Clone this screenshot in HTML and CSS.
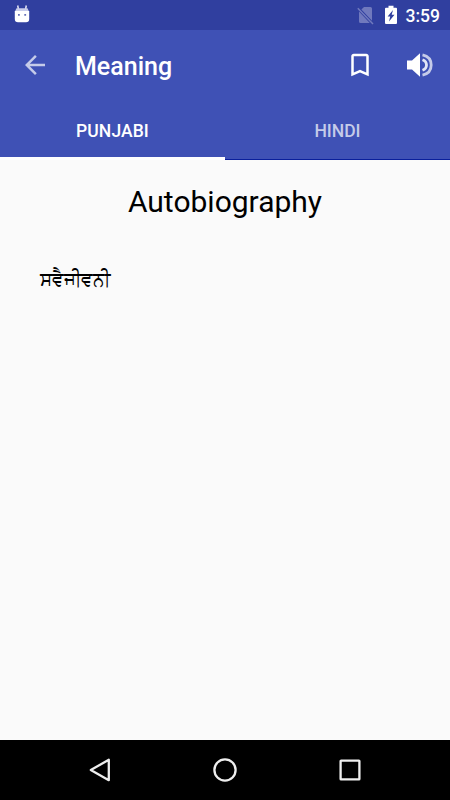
FILE: index.html
```
<!DOCTYPE html>
<html lang="en">
<head>
  <meta charset="utf-8">
  <meta name="viewport" content="width=device-width, initial-scale=1">
  <title>Meaning</title>
  <link rel="stylesheet" href="styles.css">
</head>

<body>
  <div class="statusbar">
    <svg class="notification" width="16" height="18" viewBox="0 0 16 18">
      <path d="M3.700 0.500L4.400 4M12.300 0.500L11.600 4" stroke="#e3e5f4" stroke-width="1.500"/>
      <path fill="#c9cdea" d="M2.500 3.300h11l1.700 3.500H0.800z"/>
      <path fill="#fff" d="M0.800 6h14.400v8q0 3.200-3.200 3.200H4Q0.800 17.200 0.800 14z"/>
      <path fill="#6670b8" d="M4 9h1.800v1.800H4zM10.300 9h1.800v1.800h-1.800z"/>
    </svg>
    <div class="system">
      <svg width="18" height="20" viewBox="0 0 18 20">
        <path fill="#7079bd" d="M7 2h6.500q1.500 0 1.500 1.500v12.300L4.400 4.600zM2 6.500L12.800 18H3.500Q2 18 2 16.500z"/>
        <path d="M0.800 3.200L16 19" stroke="#7079bd" stroke-width="1.500"/>
      </svg>
      <svg class="battery" width="12" height="20" viewBox="0 0 12 20">
        <path fill="#fff" d="M3.500 0.800h5v1.900H11q1 0 1 1V18q0 1-1 1H1q-1 0-1-1V3.700q0-1 1-1h2.500z"/>
        <path fill="#303f9f" d="M8 5L2.600 11.500h2.600L4 16.500l5.500-6.800H6.700z"/>
      </svg>
      <span class="clock">3:59</span>
    </div>
  </div>

  <div class="toolbar">
    <svg class="back" width="30" height="30" viewBox="0 0 24 24">
      <path d="M20 11H7.830l5.590-5.590L12 4l-8 8 8 8 1.410-1.410L7.830 13H20v-2z"/>
    </svg>
    <h1>Meaning</h1>
    <svg class="bookmark" width="30" height="30" viewBox="0 0 24 24">
      <path d="M17 3H7c-1.100 0-1.990.900-1.990 2L5 21l7-3 7 3V5c0-1.100-.900-2-2-2zm0 15l-5-2.180L7 18V5h10v13z"/>
    </svg>
    <svg class="speaker" width="30" height="30" viewBox="0 0 30 30">
      <path d="M2 10.500h5l8-7.200v23.400L7 19.500H2z"/>
      <path class="wave" d="M17.500 9.700q4 1.500 4 5.300t-4 5.300"/>
      <path class="wave outer" d="M17.500 4.800q8.700 2 8.700 10.200t-8.700 10.200"/>
    </svg>
  </div>

  <div class="tabs">
    <div class="tab active">PUNJABI</div>
    <div class="tab">HINDI</div>
  </div>

  <div class="content">
    <h2>Autobiography</h2>
    <p lang="pa">ਸਵੈਜੀਵਨੀ</p>
  </div>

  <div class="navbar">
    <svg width="30" height="30" viewBox="0 0 30 30">
      <path d="M23.800 4.800v20.400L5.800 15z"/>
    </svg>
    <svg width="30" height="30" viewBox="0 0 30 30">
      <circle cx="15" cy="15" r="10.600"/>
    </svg>
    <svg width="30" height="30" viewBox="0 0 30 30">
      <rect x="5.600" y="5.600" width="18.800" height="18.800" rx="0.500"/>
    </svg>
  </div>
</body>
</html>
```
FILE: styles.css
```
* {box-sizing:border-box;}
body {margin:0; height:800px; display:flex; flex-direction:column; background:#fafafa; color:#000; font-family:Roboto,"Noto Sans",sans-serif;}
h1, h2, p {margin:0;}
svg {display:block; flex:none;}

.statusbar {height:30px; padding:0 10px 0 14px; display:flex; align-items:center; justify-content:space-between; background:#303f9f; color:#fff;}
.notification {margin-bottom:3px;}
.system {display:flex; align-items:center;}
.battery {margin-left:10px;}
.clock {margin-left:9px; font-size:17.5px; font-weight:500; line-height:30px; padding-top:1px;}

.toolbar {height:70px; padding:0 15px 0 20px; display:flex; align-items:center; background:#3f51b5; color:#fff;}
.toolbar svg {fill:#fff;}
.toolbar .back {fill:#c5cbe9;}
.toolbar h1 {margin-left:25px; flex:1; font-size:25px; font-weight:500; line-height:30px; padding-top:4px;}
.speaker {margin-left:30px;}
.speaker .wave {fill:none; stroke:#e3e6f5; stroke-width:2.8;}
.speaker .outer {stroke:#c5cbe9;}

.tabs {height:60px; display:flex; background:#3f51b5;}
.tab {flex:1; border-bottom:1px solid #0a1f9c; color:#c5cbe9; font-size:17.5px; font-weight:500; line-height:62px; text-align:center;}
.tab.active {border-bottom:3px solid #fff; color:#fff; letter-spacing:0.1px;}

.content {flex:1; padding:24px 40px 0;}
.content h2 {font-size:30px; font-weight:400; line-height:36px; text-align:center;}
.content p {margin-top:45px; font-size:20px; line-height:28px; transform:scaleX(0.92); transform-origin:left;}

.navbar {height:60px; padding:0 85px; display:flex; align-items:center; justify-content:space-between; background:#000;}
.navbar svg {fill:none; stroke:#eee; stroke-width:2.3; stroke-linejoin:round;}
```
